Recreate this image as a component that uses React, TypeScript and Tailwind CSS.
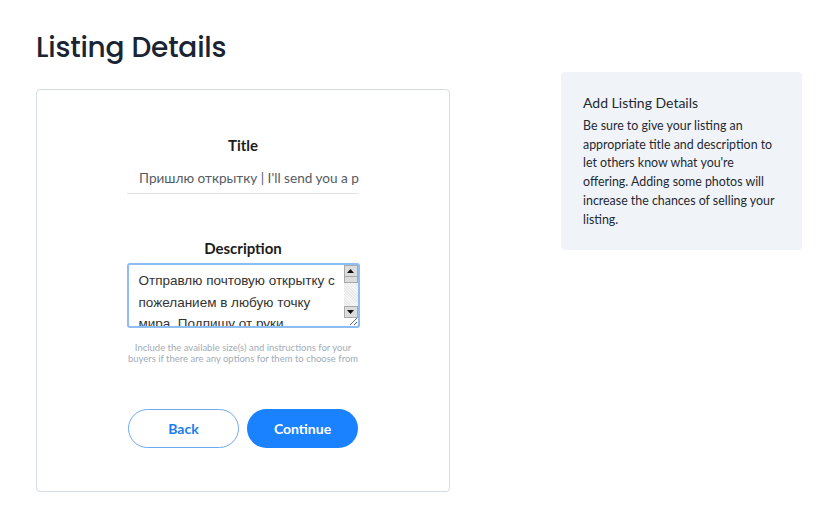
import { useState } from 'react';

const HELP =
  "Be sure to give your listing an appropriate title and description to let others know what you're offering. Adding some photos will increase the chances of selling your listing.";

function Arrow({ up }: { up?: boolean }) {
  return (
    <div className="flex h-[12px] items-center justify-center border border-[#a9a9a9] bg-[#dcdcdc]">
      <svg width="7" height="4" viewBox="0 0 7 4">
        <path d={up ? 'M0 4 L3.5 0 L7 4 Z' : 'M0 0 L3.5 4 L7 0 Z'} fill="#111" />
      </svg>
    </div>
  );
}

export default function App() {
  const [title, setTitle] = useState("Пришлю открытку | I'll send you a postcard");
  const [desc, setDesc] = useState(
    'Отправлю почтовую открытку с пожеланием в любую точку мира. Подпишу от руки.'
  );

  return (
    <div className="h-[508px] w-[820px] overflow-hidden bg-white font-['Lato',sans-serif] text-[#1f2933]">
      <div className="flex pl-9 pr-[18px]">
        <div className="w-[414px]">
          <h1 className="pt-[28px] font-['Poppins','Inter',sans-serif] text-[28px] font-medium leading-[40px] tracking-[-0.2px] text-[#1a2433]">
            Listing Details
          </h1>
          <div className="mt-[21px] flex h-[403px] flex-col items-center rounded border border-[#d5dbe3] pt-[46px]">
            <label className="text-[15px] font-bold leading-[18px] text-[#1c1c1c]">Title</label>
            <input
              value={title}
              onChange={(e) => setTitle(e.target.value)}
              className="mt-[8px] h-[32px] w-[232px] border-b border-[#dfe3e8] bg-transparent pl-3 pr-0 font-['Lato',sans-serif] text-[13.6px] text-[#555b63] outline-none"
            />
            <label className="mt-[45px] text-[15px] font-bold leading-[18px] text-[#1c1c1c]">
              Description
            </label>
            <div className="relative mt-[6px] h-[65px] w-[233px]">
              <textarea
                value={desc}
                onChange={(e) => setDesc(e.target.value)}
                className="block h-full w-full resize-y overflow-y-scroll rounded-[3px] border-2 border-[#8dbdf3] py-[5px] pl-[10px] pr-[19px] font-['Liberation_Sans',sans-serif] text-[13.5px] leading-[21.5px] text-[#333] outline-none"
              />
              <div className="pointer-events-none absolute right-[2px] top-[2px] bottom-[10px] flex w-[14px] flex-col bg-[#ececec]">
                <Arrow up />
                <div className="h-[6px] border-x border-b border-[#a9a9a9] bg-[#dcdcdc]" />
                <div className="flex-1 bg-[repeating-linear-gradient(45deg,#e9e9e9_0px,#e9e9e9_1px,#f6f6f6_1px,#f6f6f6_2px)]" />
                <Arrow />
              </div>
            </div>
            <p className="mt-[14px] w-[240px] text-center text-[9.5px] leading-[11px] text-[#a2acb7]">
              Include the available size(s) and instructions for your buyers if there are any options for them to choose from
            </p>
            <div className="mt-[45px] flex gap-2">
              <button className="h-[39px] w-[111px] rounded-full border border-[#6eaaf4] bg-white text-[14px] font-bold text-[#1b7cf0]">
                Back
              </button>
              <button className="h-[39px] w-[111px] rounded-full bg-[#1a82ff] text-[14px] font-bold text-white">
                Continue
              </button>
            </div>
          </div>
        </div>
        <div className="ml-[111px] mt-[72px] h-[178px] w-[241px] rounded bg-[#f0f4f8] px-[22px] pt-[21px]">
          <h2 className="text-[14px] leading-[20px] text-[#1f2933]">Add Listing Details</h2>
          <p className="mt-[4px] text-[12.4px] leading-[18.7px] text-[#1f2933]">{HELP}</p>
        </div>
      </div>
    </div>
  );
}
